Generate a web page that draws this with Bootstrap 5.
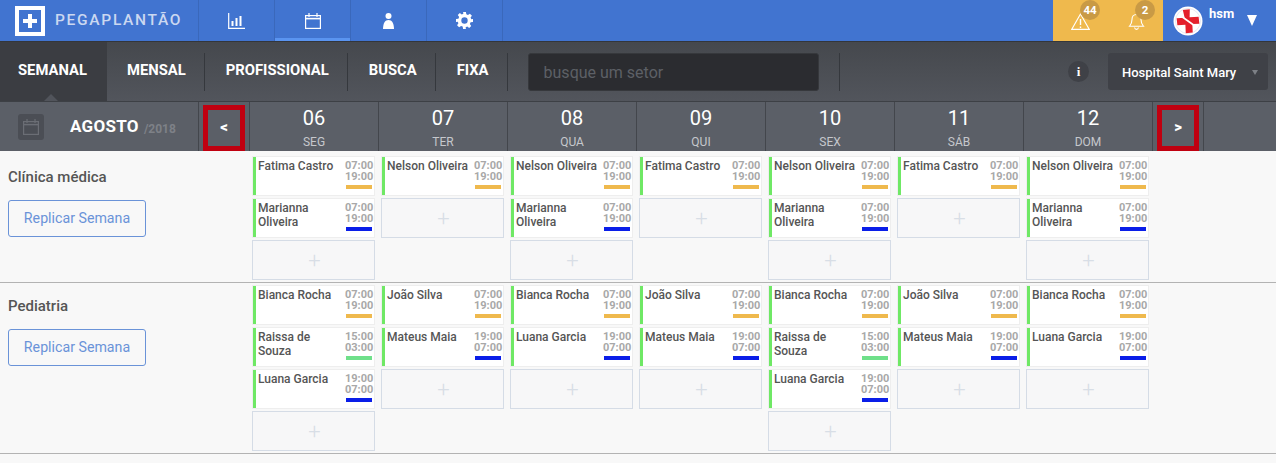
<!DOCTYPE html>
<html lang="pt-BR"><head><meta charset="utf-8"><title>PegaPlantão</title>
<link href="https://cdn.jsdelivr.net/npm/bootstrap@5.3.0/dist/css/bootstrap.min.css" rel="stylesheet">
<style>
html,body{height:100%}
body{font-family:Roboto,"Liberation Sans",sans-serif;background:#f8f8f8;color:#555;overflow:hidden;width:1276px;height:463px}
.topbar{height:41px;background:#4174d0}
.logo-box{width:198px;padding-left:15px;gap:10px}
.logo-mark{width:30px;height:30px;flex:none}
.logo-word{font-size:15.5px;letter-spacing:1.7px;color:#cbd8f0;font-weight:500;line-height:1}
.top-item{width:76px;height:41px;border-left:1px solid #3a68bb;color:#fff}
.top-item.last{width:1px;padding:0}
.top-item.on{box-shadow:inset 0 -3px 0 #5a94f0}
.alert-box{margin-left:auto;width:110px;height:41px;background:#efb94d;position:relative}
.alert-ico{position:absolute;top:13px}
.alert-num{position:absolute;top:0;width:20px;height:20px;border-radius:50%;background:#c99a45;color:#fff;font-size:11.5px;font-weight:700;text-align:center;line-height:20px}
.user-box{width:113px;height:41px;padding-left:10px;position:relative}
.user-name{color:#fff;font-size:13px;font-weight:700;margin:-14px 0 0 6px}
.user-caret{position:absolute;left:84px;top:15px;width:0;height:0;border:5.5px solid transparent;border-top:11px solid #fff;border-bottom:0}
.tabbar{height:61px;border-top:1px solid #33363b;border-bottom:1px solid #3d4045;background:linear-gradient(#45484d,#52555c)}
.tab-on{width:107px;height:59px;background:#3b3d42;color:#fff;font-weight:700;font-size:14.8px;position:relative;padding:0 0 2px 18px}
.tab-on::after{content:"";position:absolute;left:44px;bottom:0;border:7.5px solid transparent;border-bottom:7px solid #51545b;border-top:0}
.tab-it{color:#fff;font-weight:700;font-size:14.8px;height:38px;padding:0 18px 2px 21px;border-right:1px solid #35383d;white-space:nowrap}
.tab-first{padding-left:20px}
.sector-search.form-control{width:291px;height:38px;margin-left:20px;background:#2b2c30;border:1px solid #36383c;border-radius:3px;color:#fff;font-size:16px;padding:1px 15px 0}
.sector-search.form-control::placeholder{color:#5d6066;opacity:1}
.tab-sep{width:1px;height:38px;background:#35383d;margin-left:20px}
.info-dot{margin-left:auto;width:21px;height:21px;border-radius:50%;background:#3f4147;color:#fff;font:700 13px/21px "Liberation Serif",serif;text-align:center}
.hosp{width:160px;height:37px;margin:0 8px 0 19px;background:#3f4147;border-radius:3px;color:#fff;font-size:13px;font-weight:500;padding:2px 0 0 14px;position:relative;white-space:nowrap}
.hosp::after{content:"";position:absolute;right:10px;top:17px;border:3.5px solid transparent;border-top:5px solid #7d8086;border-bottom:0}
.weekbar{height:49px;background:#5b5f67;color:#fff}
.month-cell{width:198px;padding-left:18px;height:49px}
.cal-tile{width:26px;height:26px;border-radius:3px;background:#4b4e55;flex:none}
.month-name{font-size:17px;font-weight:700;margin-left:26px;letter-spacing:.3px;padding-top:1px}
.month-year{font-size:12px;font-weight:700;color:#7e8187;margin-left:5px;padding-top:4px}
.arrow-cell{width:51px;height:49px;border-left:1px solid #43464c;padding:3px 4px 0 4px}
.arrow-last{width:52px;border-right:1px solid #43464c;padding-left:4px}
.arrow-red{width:42px;height:46px;border:5px solid #c00010;color:#fff;font-weight:900;font-size:15px;line-height:1;padding-bottom:1px}
.day-cell{width:129px;height:49px;border-left:1px solid #43464c;text-align:center}
.day-num{font-size:20px;line-height:24px;margin-top:4px}
.day-name{font-size:12px;line-height:14px;color:#c6c8cc;margin-top:5px}
.sector{border-bottom:1px solid #b3b3b3;padding:2px 0}
.sector-first{margin-top:3px}
.sector-side{width:252px;flex:none;padding:0 8px}
.sector-title{font-size:15px;font-weight:500;color:#555;line-height:18px;margin:12px 0 14px}
.replicar.btn{width:138px;height:37px;padding:0;font-size:14.2px;background:transparent;color:#6a93d8;border:1px solid #6a93d8;border-radius:3px;font-weight:400}
.daycol{width:123px;margin-right:6px;gap:2px}
.shift{height:40px;background:#fff;border:1px solid #eee;position:relative;padding:1px 2px 0 0;display:flex}
.shift::before{content:"";width:3px;margin:-1px 2px 0 0;background:#6fe865;flex:none;height:38px}
.shift-name{font-size:12px;font-weight:500;line-height:14px;color:#555;flex:1;padding-top:1px;min-width:0}
.shift-time{width:27px;flex:none;text-align:right;font-size:11px;font-weight:700;color:#a8a8a8;line-height:11px;padding-top:2px}
.shift-bar{height:4px;margin-top:3px;width:26px;margin-left:auto}
.bar-day{background:#efb94d}.bar-night{background:#0a1ee8}.bar-mid{background:#6fe08a}
.shift-add{height:40px;background:#f7f7f8;border:1px solid #d5dce6;color:#d8dee6;font-size:22px;font-weight:300;padding-left:2px}
</style></head><body>

<nav class="topbar d-flex align-items-center">
 <div class="logo-box d-flex align-items-center">
  <svg class="logo-mark" viewBox="0 0 30 30"><rect width="30" height="30" fill="#fff"/><rect x="4" y="4" width="22" height="22" fill="#4174d0"/><path d="M13 8h4v5h5v4h-5v5h-4v-5H8v-4h5z" fill="#fff"/></svg>
  <span class="logo-word">PEGAPLANTÃO</span>
 </div>
 <a class="top-item d-flex align-items-center justify-content-center"><svg width="17" height="16" viewBox="0 0 17 16" fill="none" stroke="#fff"><path d="M.7 0v15.3H17" stroke-width="1.2"/><path d="M4.5 8v5M8.5 5v8M12.5 3v10" stroke-width="2"/></svg></a>
 <a class="top-item on d-flex align-items-center justify-content-center"><svg width="16" height="16" viewBox="0 0 16 16" fill="none" stroke="#fff" stroke-width="1.2"><rect x=".6" y="2.6" width="14.8" height="12.8"/><path d="M.6 5.6h14.8" stroke-width="1.6"/><path d="M4 0v4M12 0v4"/></svg></a>
 <a class="top-item d-flex align-items-center justify-content-center"><svg width="11" height="16" viewBox="0 0 11 16" fill="#fff"><circle cx="5.5" cy="3" r="3"/><path d="M5.5 7C2 7 .2 10 0 16h11c-.2-6-2-9-5.500-9z"/></svg></a>
 <a class="top-item d-flex align-items-center justify-content-center"><svg width="17" height="17" viewBox="0 0 24 24" fill="#fff"><path fill-rule="evenodd" d="M10 0h4l.6 3.200 2.300 1 2.700-1.900 2.900 2.900-1.900 2.700 1 2.300L24 10v4l-3.400.6-1 2.300 1.900 2.700-2.900 2.900-2.700-1.900-2.300 1L14 24h-4l-.6-3.400-2.300-1-2.700 1.900-2.900-2.900 1.900-2.700-1-2.300L0 14v-4l3.400-.6 1-2.300-1.900-2.700 2.900-2.900 2.700 1.900 2.300-1zM12 7.500a4.500 4.500 0 1 0 0 9 4.500 4.500 0 0 0 0-9z"/></svg></a>
 <span class="top-item last"></span>
 <div class="alert-box">
  <svg class="alert-ico" style="left:18px" width="19" height="17" viewBox="0 0 19 17" fill="none" stroke="#fff" stroke-width="1.1"><path d="M9.500 1 18.300 16.400H.7z"/><path d="M9.500 6v6M9.500 13.500v1.400" stroke-width="1.400"/></svg>
  <span class="alert-num" style="left:27px">44</span>
  <svg class="alert-ico" style="left:75px" width="17" height="17" viewBox="0 0 17 17" fill="none" stroke="#fff" stroke-width="1.1"><path d="M8.500 1.500c-3 0-4.500 2-4.500 5 0 3.500-.8 5-2.500 6.800h14c-1.700-1.800-2.500-3.300-2.500-6.800 0-3-1.500-5-4.500-5zM6.500 14.500c.3 1.300 1 1.900 2 1.900s1.700-.6 2-1.900"/></svg>
  <span class="alert-num" style="left:82px">2</span>
 </div>
 <div class="user-box d-flex align-items-center">
  <svg width="30" height="30" viewBox="0 0 30 30" class="flex-none"><circle cx="15" cy="15" r="14.500" fill="#fff"/><circle cx="15" cy="15" r="12.500" fill="none" stroke="#e8e8f0"/><path d="M11 3.500h7l-1 8 9 .5v7l-7-.5-.5 8.500h-7l.5-8.500-8-.5v-7l8 .5z" fill="#e4202c" transform="rotate(-6 15 15)"/><path d="M8 10l14 10" stroke="#fff" stroke-width="1.600"/></svg>
  <span class="user-name">hsm</span>
  <span class="user-caret"></span>
 </div>
</nav>

<div class="tabbar d-flex align-items-center">
 <div class="tab-on d-flex align-items-center">SEMANAL</div>
 <div class="tab-it d-flex align-items-center tab-first">MENSAL</div>
 <div class="tab-it d-flex align-items-center">PROFISSIONAL</div>
 <div class="tab-it d-flex align-items-center">BUSCA</div>
 <div class="tab-it d-flex align-items-center">FIXA</div>
 <input class="form-control sector-search" type="text" placeholder="busque um setor">
 <span class="tab-sep"></span>
 <span class="info-dot">i</span>
 <div class="hosp d-flex align-items-center">Hospital Saint Mary</div>
</div>

<div class="weekbar d-flex">
 <div class="month-cell d-flex align-items-center">
  <span class="cal-tile d-flex align-items-center justify-content-center"><svg width="16" height="16" viewBox="0 0 16 16" fill="none" stroke="#6b6e75" stroke-width="1.200"><rect x=".6" y="2.600" width="14.800" height="12.800"/><path d="M.6 5.600h14.800" stroke-width="1.500"/><path d="M4 0v4M12 0v4"/></svg></span>
  <span class="month-name">AGOSTO</span><span class="month-year">/2018</span>
 </div>
 <div class="arrow-cell"><div class="arrow-red d-flex align-items-center justify-content-center">&lt;</div></div>
 <div class="day-cell"><div class="day-num">06</div><div class="day-name">SEG</div></div>
 <div class="day-cell"><div class="day-num">07</div><div class="day-name">TER</div></div>
 <div class="day-cell"><div class="day-num">08</div><div class="day-name">QUA</div></div>
 <div class="day-cell"><div class="day-num">09</div><div class="day-name">QUI</div></div>
 <div class="day-cell"><div class="day-num">10</div><div class="day-name">SEX</div></div>
 <div class="day-cell"><div class="day-num">11</div><div class="day-name">SÁB</div></div>
 <div class="day-cell"><div class="day-num">12</div><div class="day-name">DOM</div></div>
 <div class="arrow-cell arrow-last"><div class="arrow-red d-flex align-items-center justify-content-center">&gt;</div></div>
</div>

<section class="sector sector-first d-flex">
 <div class="sector-side"><h2 class="sector-title">Clínica médica</h2><button class="btn replicar" type="button">Replicar Semana</button></div>
 <div class="daycol d-flex flex-column">
  <div class="shift"><div class="shift-name">Fatima Castro</div><div class="shift-time">07:00<br>19:00<div class="shift-bar bar-day"></div></div></div>
  <div class="shift"><div class="shift-name">Marianna Oliveira</div><div class="shift-time">07:00<br>19:00<div class="shift-bar bar-night"></div></div></div>
  <div class="shift-add d-flex align-items-center justify-content-center">+</div>
 </div>
 <div class="daycol d-flex flex-column">
  <div class="shift"><div class="shift-name">Nelson Oliveira</div><div class="shift-time">07:00<br>19:00<div class="shift-bar bar-day"></div></div></div>
  <div class="shift-add d-flex align-items-center justify-content-center">+</div>
 </div>
 <div class="daycol d-flex flex-column">
  <div class="shift"><div class="shift-name">Nelson Oliveira</div><div class="shift-time">07:00<br>19:00<div class="shift-bar bar-day"></div></div></div>
  <div class="shift"><div class="shift-name">Marianna Oliveira</div><div class="shift-time">07:00<br>19:00<div class="shift-bar bar-night"></div></div></div>
  <div class="shift-add d-flex align-items-center justify-content-center">+</div>
 </div>
 <div class="daycol d-flex flex-column">
  <div class="shift"><div class="shift-name">Fatima Castro</div><div class="shift-time">07:00<br>19:00<div class="shift-bar bar-day"></div></div></div>
  <div class="shift-add d-flex align-items-center justify-content-center">+</div>
 </div>
 <div class="daycol d-flex flex-column">
  <div class="shift"><div class="shift-name">Nelson Oliveira</div><div class="shift-time">07:00<br>19:00<div class="shift-bar bar-day"></div></div></div>
  <div class="shift"><div class="shift-name">Marianna Oliveira</div><div class="shift-time">07:00<br>19:00<div class="shift-bar bar-night"></div></div></div>
  <div class="shift-add d-flex align-items-center justify-content-center">+</div>
 </div>
 <div class="daycol d-flex flex-column">
  <div class="shift"><div class="shift-name">Fatima Castro</div><div class="shift-time">07:00<br>19:00<div class="shift-bar bar-day"></div></div></div>
  <div class="shift-add d-flex align-items-center justify-content-center">+</div>
 </div>
 <div class="daycol d-flex flex-column">
  <div class="shift"><div class="shift-name">Nelson Oliveira</div><div class="shift-time">07:00<br>19:00<div class="shift-bar bar-day"></div></div></div>
  <div class="shift"><div class="shift-name">Marianna Oliveira</div><div class="shift-time">07:00<br>19:00<div class="shift-bar bar-night"></div></div></div>
  <div class="shift-add d-flex align-items-center justify-content-center">+</div>
 </div>
</section>

<section class="sector d-flex">
 <div class="sector-side"><h2 class="sector-title">Pediatria</h2><button class="btn replicar" type="button">Replicar Semana</button></div>
 <div class="daycol d-flex flex-column">
  <div class="shift"><div class="shift-name">Bianca Rocha</div><div class="shift-time">07:00<br>19:00<div class="shift-bar bar-day"></div></div></div>
  <div class="shift"><div class="shift-name">Raissa de Souza</div><div class="shift-time">15:00<br>03:00<div class="shift-bar bar-mid"></div></div></div>
  <div class="shift"><div class="shift-name">Luana Garcia</div><div class="shift-time">19:00<br>07:00<div class="shift-bar bar-night"></div></div></div>
  <div class="shift-add d-flex align-items-center justify-content-center">+</div>
 </div>
 <div class="daycol d-flex flex-column">
  <div class="shift"><div class="shift-name">João Silva</div><div class="shift-time">07:00<br>19:00<div class="shift-bar bar-day"></div></div></div>
  <div class="shift"><div class="shift-name">Mateus Maia</div><div class="shift-time">19:00<br>07:00<div class="shift-bar bar-night"></div></div></div>
  <div class="shift-add d-flex align-items-center justify-content-center">+</div>
 </div>
 <div class="daycol d-flex flex-column">
  <div class="shift"><div class="shift-name">Bianca Rocha</div><div class="shift-time">07:00<br>19:00<div class="shift-bar bar-day"></div></div></div>
  <div class="shift"><div class="shift-name">Luana Garcia</div><div class="shift-time">19:00<br>07:00<div class="shift-bar bar-night"></div></div></div>
  <div class="shift-add d-flex align-items-center justify-content-center">+</div>
 </div>
 <div class="daycol d-flex flex-column">
  <div class="shift"><div class="shift-name">João Silva</div><div class="shift-time">07:00<br>19:00<div class="shift-bar bar-day"></div></div></div>
  <div class="shift"><div class="shift-name">Mateus Maia</div><div class="shift-time">19:00<br>07:00<div class="shift-bar bar-night"></div></div></div>
  <div class="shift-add d-flex align-items-center justify-content-center">+</div>
 </div>
 <div class="daycol d-flex flex-column">
  <div class="shift"><div class="shift-name">Bianca Rocha</div><div class="shift-time">07:00<br>19:00<div class="shift-bar bar-day"></div></div></div>
  <div class="shift"><div class="shift-name">Raissa de Souza</div><div class="shift-time">15:00<br>03:00<div class="shift-bar bar-mid"></div></div></div>
  <div class="shift"><div class="shift-name">Luana Garcia</div><div class="shift-time">19:00<br>07:00<div class="shift-bar bar-night"></div></div></div>
  <div class="shift-add d-flex align-items-center justify-content-center">+</div>
 </div>
 <div class="daycol d-flex flex-column">
  <div class="shift"><div class="shift-name">João Silva</div><div class="shift-time">07:00<br>19:00<div class="shift-bar bar-day"></div></div></div>
  <div class="shift"><div class="shift-name">Mateus Maia</div><div class="shift-time">19:00<br>07:00<div class="shift-bar bar-night"></div></div></div>
  <div class="shift-add d-flex align-items-center justify-content-center">+</div>
 </div>
 <div class="daycol d-flex flex-column">
  <div class="shift"><div class="shift-name">Bianca Rocha</div><div class="shift-time">07:00<br>19:00<div class="shift-bar bar-day"></div></div></div>
  <div class="shift"><div class="shift-name">Luana Garcia</div><div class="shift-time">19:00<br>07:00<div class="shift-bar bar-night"></div></div></div>
  <div class="shift-add d-flex align-items-center justify-content-center">+</div>
 </div>
</section>

<script src="https://cdn.jsdelivr.net/npm/bootstrap@5.3.0/dist/js/bootstrap.bundle.min.js"></script>
</body></html>
